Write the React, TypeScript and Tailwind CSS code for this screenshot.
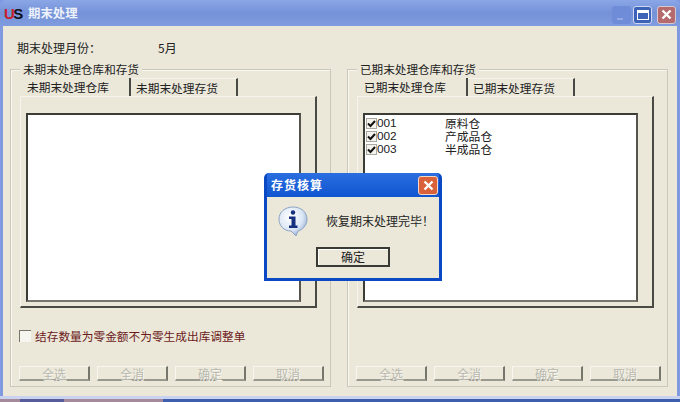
const font = "font-['Noto_Sans_CJK_SC','Liberation_Sans',sans-serif]";

const itemRows = [
  { code: "001", name: "原料仓" },
  { code: "002", name: "产成品仓" },
  { code: "003", name: "半成品仓" },
];

function CheckBox({ checked }: { checked?: boolean }) {
  return (
    <span className="mt-[2px] flex h-[11px] w-[11px] shrink-0 items-center justify-center border border-[#a9a9a2] bg-[#f4f3ee]">
      {checked && (
        <svg width="9" height="9" viewBox="0 0 9 9">
          <path d="M1 4.5 L3.5 7 L8 2" fill="none" stroke="#111" strokeWidth="2" />
        </svg>
      )}
    </span>
  );
}

function DisabledButton({ label }: { label: string }) {
  return (
    <div className="flex h-[15px] w-[71px] items-center justify-center border-t border-l border-t-[#f7f6f0] border-l-[#f7f6f0] border-r-2 border-b-2 border-r-[#77766c] border-b-[#9a998e] text-[12px] leading-[13px] text-[#b9b8ad] [text-shadow:1px_1px_0_#f7f6f0]">
      {label}
    </div>
  );
}

function GroupPanel({
  title,
  tabA,
  tabB,
  rows,
  footer,
}: {
  title: string;
  tabA: string;
  tabB: string;
  rows?: typeof itemRows;
  footer?: React.ReactNode;
}) {
  return (
    <div className="flex h-[318px] w-[321px] flex-col border border-[#c9c8bb] shadow-[inset_1px_1px_0_#f8f7f2]">
      <div className="-mt-[9px] ml-[9px] h-[17px] self-start bg-[#ebe8da] px-[3px] text-[11.6px] leading-[17px] text-[#222]">
        {title}
      </div>
      <div className="ml-[9px] flex h-[18px] items-stretch text-[11.7px] text-[#222]">
        <div className="flex w-[111px] items-center border-r-2 border-[#4a4a44] pl-[7px]">{tabA}</div>
        <div className="flex w-[107px] items-center border-r-2 border-t border-[#4a4a44] border-t-[#f5f4ee] pl-[5px]">
          {tabB}
        </div>
      </div>
      <div className="ml-[9px] flex h-[212px] w-[297px] flex-col border-t border-l border-r-2 border-b-2 border-t-[#f5f4ee] border-l-[#f5f4ee] border-r-[#4a4a44] border-b-[#4a4a44] pl-[5px] pt-[16px]">
        <div className="h-[189px] w-[275px] border-2 border-t-[#3c3c36] border-l-[#3c3c36] border-r-[#55554e] border-b-[#77766c] bg-white px-[1px] pt-[1px]">
          {rows?.map((row) => (
            <div key={row.code} className="flex h-[13px] items-center text-[11.8px] text-[#222]">
              <CheckBox checked />
              <span className="mt-[2px] block h-[13px] w-[68px] font-['Liberation_Sans',sans-serif] leading-[13px]">
                {row.code}
              </span>
              <span className="block h-[13px] leading-[13px]">{row.name}</span>
            </div>
          ))}
        </div>
      </div>
      <div className="flex h-[58px] items-center pb-[2px] pl-[8px]">{footer}</div>
      <div className="flex justify-between pl-[8px] pr-[6px]">
        {["全选", "全消", "确定", "取消"].map((label) => (
          <DisabledButton key={label} label={label} />
        ))}
      </div>
    </div>
  );
}

function InfoIcon() {
  return (
    <svg width="30" height="31" viewBox="0 0 30 31">
      <defs>
        <radialGradient id="bubble" cx="0.4" cy="0.35" r="0.75">
          <stop offset="0" stopColor="#ffffff" />
          <stop offset="0.6" stopColor="#dbe6f5" />
          <stop offset="1" stopColor="#7f9cc8" />
        </radialGradient>
      </defs>
      <path
        d="M15 1 C23 1 29 6 29 13 C29 20 24 24 20 25 L18 30 L13 25 C6 25 1 20 1 13 C1 6 7 1 15 1 Z"
        fill="url(#bubble)"
        stroke="#8fa5c4"
      />
      <circle cx="15" cy="6.5" r="2.2" fill="#14307f" />
      <path d="M11 10.5 H17.5 V19.5 H19.5 V22 H11 V19.5 H13.5 V13 H11 Z" fill="#14307f" />
    </svg>
  );
}

export default function App() {
  return (
    <div className={`relative flex h-[402px] w-[680px] flex-col overflow-hidden bg-[#7f9ae0] ${font}`}>
      <div className="flex h-[26px] shrink-0 items-center rounded-t-[6px] bg-gradient-to-b from-[#8aa6e6] via-[#7592d8] to-[#7f9ce0] pl-[4px] pr-[4px]">
        <div className="flex h-[16px] w-[20px] items-center font-['Liberation_Sans',sans-serif] text-[15px] leading-none font-black tracking-[-1.5px]">
          <span className="text-[#c8202c]">U</span>
          <span className="text-[#101018]">S</span>
        </div>
        <span className="ml-[4px] text-[12.4px] font-bold text-[#eef2fb]">期末处理</span>
        <div className="ml-auto flex pt-[3px]">
          <div className="flex h-[18px] w-[19px] items-end rounded-[3px] bg-[#6f8cd8] pb-[4px] pl-[5px]">
            <div className="h-[2px] w-[6px] bg-[#93a9e2]" />
          </div>
          <div className="ml-[2px] flex h-[18px] w-[19px] items-center justify-center rounded-[3px] border border-[#cfd8f0] bg-[#3c63b8]">
            <div className="h-[10px] w-[12px] border border-t-[3px] border-white" />
          </div>
          <div className="ml-[5px] flex h-[18px] w-[19px] items-center justify-center rounded-[3px] border border-[#d9c8d0] bg-[#b56a6e]">
            <svg width="11" height="11" viewBox="0 0 11 11">
              <path d="M1.5 1.5 L9.5 9.5 M9.5 1.5 L1.5 9.5" stroke="#fff" strokeWidth="2.4" />
            </svg>
          </div>
        </div>
      </div>

      <div className="mx-[3px] flex h-[370px] shrink-0 flex-col bg-[#ebe8da] pl-[7px] pr-[9px]">
        <div className="flex h-[43px] items-center pl-[7px] text-[12px] text-[#222]">
          <span className="w-[141px]">期末处理月份：</span>
          <span>5月</span>
        </div>
        <div className="flex justify-between">
          <GroupPanel
            title="未期末处理仓库和存货"
            tabA="未期末处理仓库"
            tabB="未期末处理存货"
            footer={
              <div className="flex items-center">
                <span className="h-[12px] w-[12px] border border-b-0 border-r-0 border-[#77766c] bg-[#f6f5f0]" />
                <span className="ml-[4px] text-[11.7px] text-[#6b1a1a]">结存数量为零金额不为零生成出库调整单</span>
              </div>
            }
          />
          <GroupPanel
            title="已期末处理仓库和存货"
            tabA="已期末处理仓库"
            tabB="已期末处理存货"
            rows={itemRows}
          />
        </div>
      </div>
      <div className="h-[3px] shrink-0 bg-[#c9d3f0]" />
      <div className="flex h-[3px] shrink-0 bg-[#3e5fae]">
        <div className="h-full w-[20px] bg-[#a58a9c]" />
        <div className="h-full w-[44px] bg-[#565c9c]" />
        <div className="h-full w-[99px] bg-[#a58a9c]" />
      </div>

      <div className="absolute left-[264px] top-[173px] flex h-[108px] w-[178px] flex-col rounded-t-[5px] bg-[#0a48c4] px-[3px] pb-[3px]">
        <div className="flex h-[24px] shrink-0 items-center justify-between bg-gradient-to-b from-[#2a6ee0] to-[#0f55d0] pl-[4px] pr-[1px]">
          <span className="text-[12px] font-bold tracking-[1px] text-white">存货核算</span>
          <div className="flex h-[19px] w-[20px] items-center justify-center rounded-[3px] border border-[#f2d8c8] bg-[#d9623a]">
            <svg width="11" height="11" viewBox="0 0 11 11">
              <path d="M1.5 1.5 L9.5 9.5 M9.5 1.5 L1.5 9.5" stroke="#fff" strokeWidth="2.4" />
            </svg>
          </div>
        </div>
        <div className="flex flex-1 flex-col items-center bg-[#ebe8da] pt-[9px]">
          <div className="flex w-full items-center pl-[11px]">
            <InfoIcon />
            <span className="-mt-[2px] ml-[18px] text-[12px] text-[#222]">恢复期末处理完毕！</span>
          </div>
          <div className="mt-[10px] flex h-[20px] w-[74px] items-center justify-center border-2 border-[#3a3a34] bg-[#ebe8da] text-[12px] text-[#222] shadow-[inset_1px_1px_0_#fff]">
            确定
          </div>
        </div>
      </div>
    </div>
  );
}
